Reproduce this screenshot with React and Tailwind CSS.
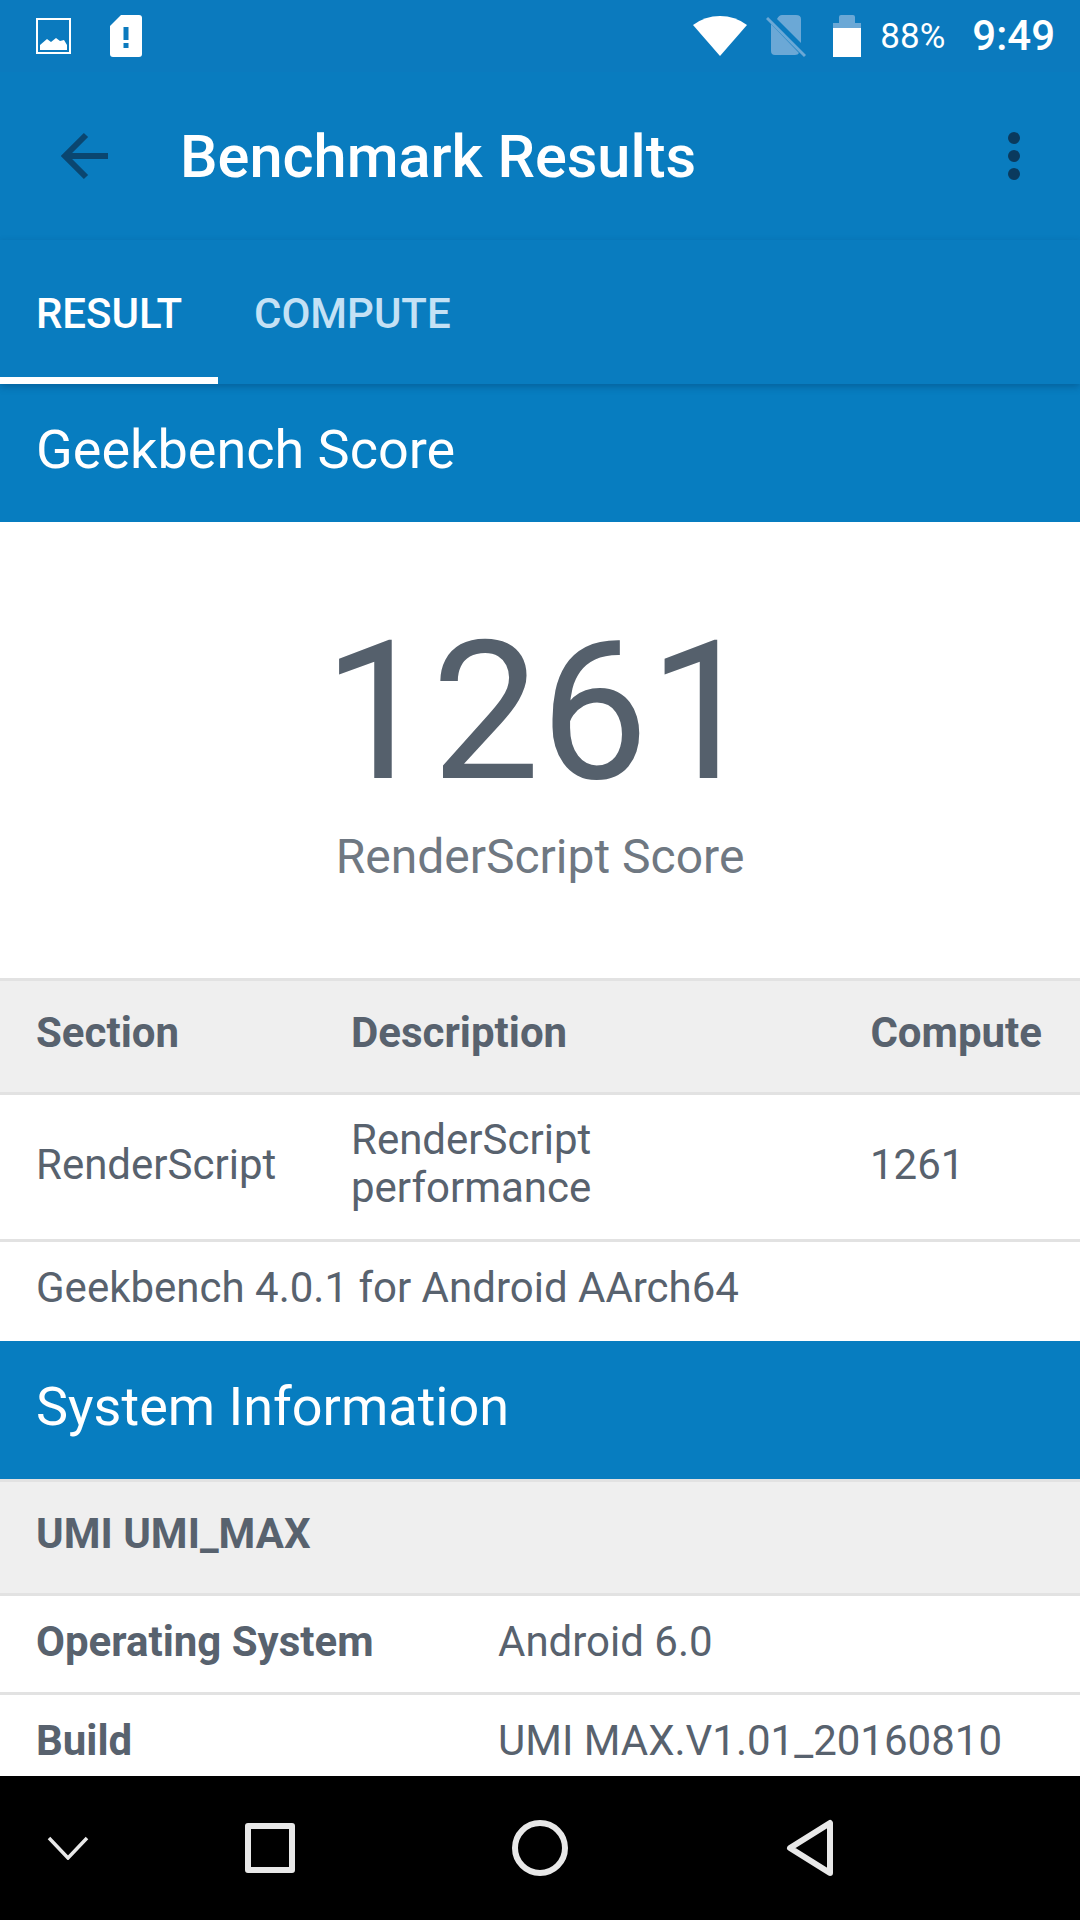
const font = { fontFamily: "Roboto, sans-serif" };

function StatusBar() {
  return (
    <div className="h-[72px] flex items-center justify-between bg-[#0b7abe] text-white shrink-0">
      <div className="flex items-center pl-[36px] gap-[38px]">
        <svg width="35" height="36" viewBox="0 0 35 36" fill="none">
          <rect x="1" y="1" width="33" height="34" stroke="white" strokeWidth="2" />
          <path d="M4 32V27L11 21L15 24L20 20L24 23L28 22L31 27V32Z" fill="white" />
        </svg>
        <svg width="34" height="44" viewBox="0 0 34 44">
          <path d="M12 1H30Q33 1 33 4V40Q33 43 30 43H4Q1 43 1 40V12Z" fill="white" />
          <rect x="14.500" y="13" width="5" height="13" fill="#0b7abe" />
          <rect x="14.500" y="29" width="5" height="5" fill="#0b7abe" />
        </svg>
      </div>
      <div className="flex items-center pr-[25px]">
        <svg width="54" height="42" viewBox="0 0 54 42" className="mr-[19px]">
          <path d="M27 41L0 10Q12 1 27 1Q42 1 54 10Z" fill="white" />
        </svg>
        <svg width="40" height="44" viewBox="0 0 40 44" className="mr-[26px]">
          <path d="M16 1H30Q35 1 35 5V29L11 5Q13 1 16 1ZM5 10L33 39Q32 41 29 41H9Q5 41 5 37Z" fill="#6ba8d6" />
          <path d="M1 4L39 42" stroke="#6ba8d6" strokeWidth="3" />
        </svg>
        <svg width="30" height="44" viewBox="0 0 30 44" className="mr-[18px]">
          <path d="M7 9V3Q7 1 9 1H21Q23 1 23 3V9H29V14H1V9Z" fill="#6ba8d6" />
          <rect x="1" y="14" width="28" height="29" fill="white" />
        </svg>
        <span className="text-[35px] leading-none mr-[27px]">88%</span>
        <span className="text-[42px] leading-none font-medium">9:49</span>
      </div>
    </div>
  );
}

function AppBar() {
  return (
    <div className="h-[168px] flex items-center bg-[#097cbf] shrink-0">
      <div className="w-[180px] pl-[60px] shrink-0">
        <svg width="48" height="48" viewBox="0 0 48 48" fill="none">
          <path d="M48 24H5M26 3L5 24L26 45" stroke="#0a4670" strokeWidth="6" />
        </svg>
      </div>
      <div className="text-white text-[59.500px] font-medium leading-none flex-1 pt-[4px]">Benchmark Results</div>
      <div className="flex flex-col gap-[6px] pr-[60px]">
        <div className="w-[12px] h-[12px] rounded-full bg-[#0a3a5e]" />
        <div className="w-[12px] h-[12px] rounded-full bg-[#0a3a5e]" />
        <div className="w-[12px] h-[12px] rounded-full bg-[#0a3a5e]" />
      </div>
    </div>
  );
}

function Tabs() {
  return (
    <div className="h-[144px] flex bg-[#097cbf] shrink-0 shadow-[0_3px_7px_rgba(0,40,80,0.3)] relative z-10">
      <div className="w-[218px] flex items-center justify-center border-b-[7px] border-white text-white text-[42px] font-medium pt-[10px]">
        RESULT
      </div>
      <div className="flex items-center text-[#c4e1f5] text-[42px] font-medium pt-[3px] pl-[36px]">
        COMPUTE
      </div>
    </div>
  );
}

function Band({ children, className }) {
  return (
    <div className={`bg-[#077dc0] text-white flex items-center pl-[36px] text-[54px] shrink-0 pb-[8px] ${className}`}>
      {children}
    </div>
  );
}

function Row({ children, className }) {
  return <div className={`flex shrink-0 border-b-[3px] border-[#e2e2e2] text-[#58626e] text-[42px] ${className}`}>{children}</div>;
}

export default function App() {
  return (
    <div className="w-[1080px] h-[1920px] flex flex-col bg-white overflow-hidden" style={font}>
      <StatusBar />
      <AppBar />
      <Tabs />
      <Band className="h-[138px]">Geekbench Score</Band>
      <div className="h-[459px] flex flex-col items-center shrink-0 border-b-[3px] border-[#e2e2e2]">
        <div className="text-[#55606c] text-[193px] leading-none mt-[94px]">1261</div>
        <div className="text-[#6f7882] text-[48px] leading-none mt-[24px]">RenderScript Score</div>
      </div>
      <Row className="h-[114px] bg-[#efefef] items-center font-bold pb-[8px]">
        <div className="w-[351px] pl-[36px] shrink-0">Section</div>
        <div className="flex-1">Description</div>
        <div className="pr-[38px]">Compute</div>
      </Row>
      <Row className="h-[147px] items-center pb-[6px]">
        <div className="w-[351px] pl-[36px] shrink-0">RenderScript</div>
        <div className="flex-1 leading-[48px]">
          RenderScript
          <br />
          performance
        </div>
        <div className="w-[210px] shrink-0">1261</div>
      </Row>
      <div className="h-[99px] flex items-center pl-[36px] pb-[8px] text-[42px] text-[#58626e] shrink-0">
        Geekbench 4.0.1 for Android AArch64
      </div>
      <Band className="h-[138px]">System Information</Band>
      <Row className="h-[117px] bg-[#efefef] items-center font-bold border-t-[3px] pl-[36px] pb-[8px]">UMI UMI_MAX</Row>
      <Row className="h-[99px] items-center pb-[6px]">
        <div className="w-[498px] pl-[36px] shrink-0 font-bold">Operating System</div>
        <div>Android 6.0</div>
      </Row>
      <div className="h-[81px] flex items-center text-[#58626e] text-[42px] shrink-0 pt-[10px]">
        <div className="w-[498px] pl-[36px] shrink-0 font-bold">Build</div>
        <div>UMI MAX.V1.01_20160810</div>
      </div>
      <div className="flex-1 bg-black flex items-center">
        <svg width="42" height="24" viewBox="0 0 42 24" fill="none" className="ml-[47px]">
          <path d="M2 2L21 22L40 2" stroke="#e8e8e8" strokeWidth="3.500" />
        </svg>
        <div className="w-[50px] h-[50px] border-[6px] border-[#e8e8e8] rounded-[3px] ml-[156px]" />
        <div className="w-[56px] h-[56px] border-[6px] border-[#e8e8e8] rounded-full ml-[217px]" />
        <svg width="50" height="58" viewBox="0 0 50 58" fill="none" className="ml-[218px]">
          <path d="M44 4V54L4 29Z" stroke="#e8e8e8" strokeWidth="6" strokeLinejoin="round" />
        </svg>
      </div>
    </div>
  );
}
